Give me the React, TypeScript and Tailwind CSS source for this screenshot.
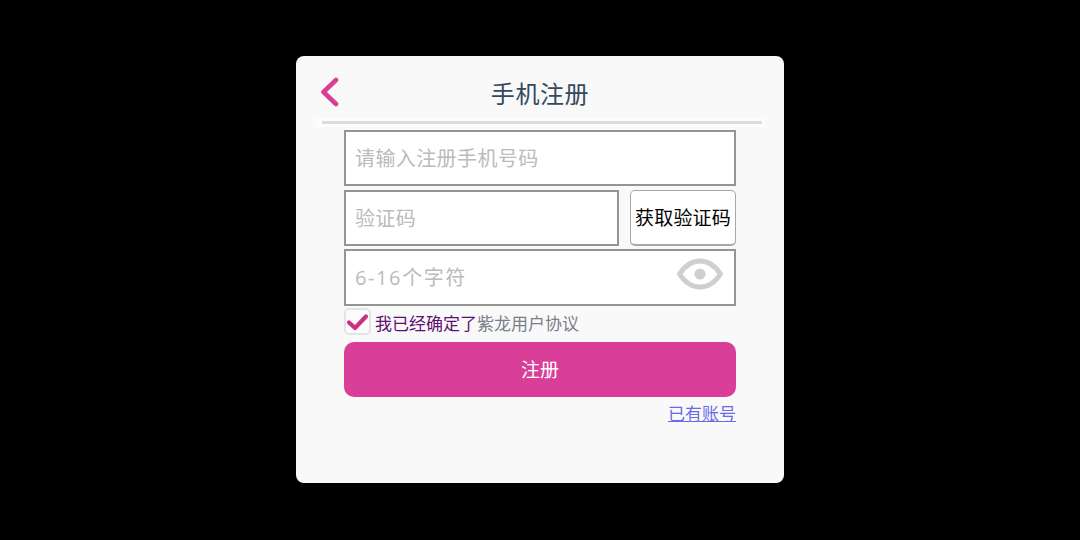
export default function App() {
  const font = { fontFamily: '"Noto Sans CJK SC", "Noto Sans", sans-serif' };
  return (
    <div className="w-[1080px] h-[540px] bg-black flex items-start justify-center pt-[56px]" style={font}>
      <div className="w-[488px] h-[427px] bg-[#f9f9f9] rounded-[8px] flex flex-col">
        <div className="h-[62px] mx-[24px] relative flex items-center justify-center pt-[11px]">
          <svg className="absolute left-0 top-[21px]" width="20" height="30" viewBox="0 0 20 30" fill="none">
            <path d="M16 3 L3.5 15 L16 27" stroke="#d93f98" strokeWidth="4.6" strokeLinecap="round" strokeLinejoin="round" />
          </svg>
          <span className="text-[24px] leading-[32px] tracking-[0.6px] text-[#34495e]">手机注册</span>
        </div>
        <div className="h-[9px] bg-[#fdfdfd] mx-[20px] flex items-center pl-[6px] pr-[2px]">
          <div className="h-[3px] w-full bg-[#dcdcdc]" />
        </div>
        <div className="px-[48px] flex flex-col mt-[3px]">
          <div className="h-[56px] bg-white border-2 border-[#949494] flex items-center pl-[9px] text-[20px] tracking-[0.4px] text-[#bbbbbb]">请输入注册手机号码</div>
          <div className="flex justify-between mt-[4px]">
            <div className="w-[275px] h-[56px] bg-white border-2 border-[#949494] flex items-center pl-[9px] text-[20px] tracking-[0.35px] text-[#bbbbbb]">验证码</div>
            <div className="w-[106px] h-[56px] bg-white border border-b-2 border-[#a8a8a8] rounded-[5px] flex items-center justify-center text-[19px] tracking-[0.2px] text-black whitespace-nowrap">获取验证码</div>
          </div>
          <div className="h-[57px] mt-[3px] bg-white border-2 border-[#949494] flex items-center justify-between pl-[9px] pr-[10px] text-[20px] text-[#bbbbbb]">
            <span className="tracking-[1.6px]" style={{ fontFamily: '"Open Sans", "Noto Sans CJK SC", sans-serif' }}>6-16个字符</span>
            <svg width="48" height="32" viewBox="0 0 48 32" className="mb-[7px]">
              <path d="M3.5 16 C10 6 17 3 24 3 C31 3 38 6 44.5 16 C38 26 31 29 24 29 C17 29 10 26 3.5 16 Z" fill="none" stroke="#cfcfcf" strokeWidth="5" strokeLinejoin="round" />
              <circle cx="24" cy="16" r="5.5" fill="#cfcfcf" />
            </svg>
          </div>
          <div className="flex items-center h-[36px]">
            <div className="w-[27px] h-[27px] bg-[#fbfbfb] border-2 border-[#e4e4e4] rounded-[5px] flex items-center justify-center shrink-0 mb-[5px]">
              <svg width="23" height="20" viewBox="0 0 23 20" fill="none" className="shrink-0">
                <path d="M3 10.5 L9 16 L20 4.5" stroke="#cf2f83" strokeWidth="4.2" strokeLinecap="round" strokeLinejoin="round" />
              </svg>
            </div>
            <span className="ml-[4px] mb-[2px] text-[17px] leading-[24px] text-[#5f0f73] whitespace-nowrap">我已经确定了</span>
            <span className="mb-[2px] text-[17px] leading-[24px] text-[#7a7f8c] whitespace-nowrap">紫龙用户协议</span>
          </div>
          <div className="h-[55px] bg-[#d93f98] rounded-[10px] flex items-center justify-center text-white text-[19px]">注册</div>
          <div className="flex justify-end mt-[3px]">
            <span className="text-[17px] leading-[26px] text-[#6a6ae8] underline">已有账号</span>
          </div>
        </div>
      </div>
    </div>
  );
}
